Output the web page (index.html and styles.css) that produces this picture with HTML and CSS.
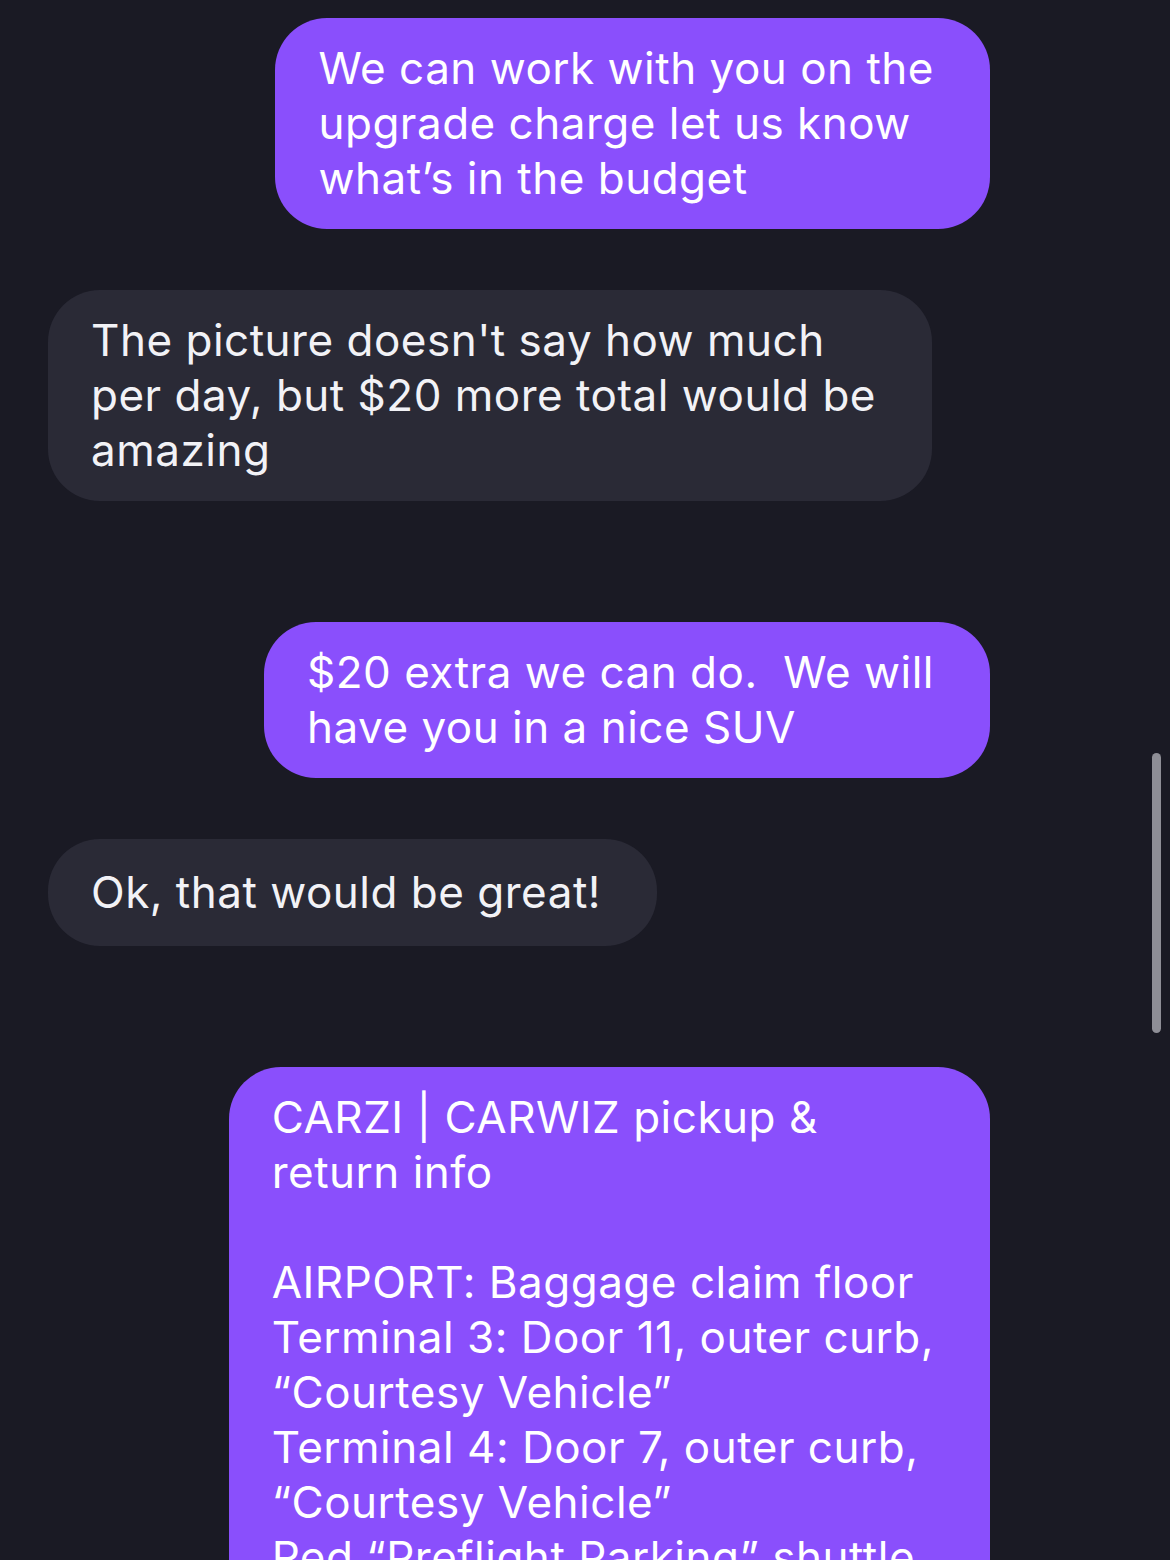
FILE: index.html
```html
<!DOCTYPE html>
<html>
<head>
<meta charset="utf-8">
<link rel="stylesheet" href="styles.css">
</head>
<body>
<div class="chat">
  <div class="row out first"><div class="bubble out-b">We can work with you on the<br>upgrade charge let us know<br>what’s in the budget</div></div>
  <div class="row in gap"><div class="bubble in-b">The picture doesn't say how much<br>per day, but $20 more total would be<br>amazing</div></div>
  <div class="row out biggap"><div class="bubble out-b">$20 extra we can do.&nbsp; We will<br>have you in a nice SUV</div></div>
  <div class="row in gap"><div class="bubble in-b single">Ok, that would be great!</div></div>
  <div class="row out biggap"><div class="bubble out-b">CARZI | CARWIZ pickup &amp;<br>return info<br><br>AIRPORT: Baggage claim floor<br>Terminal 3: Door 11, outer curb,<br>“Courtesy Vehicle”<br>Terminal 4: Door 7, outer curb,<br>“Courtesy Vehicle”<br>Red “Preflight Parking” shuttle<br>to the lot</div></div>
</div>
<div class="scrollbar"></div>
</body>
</html>
```
FILE: styles.css
```css
html, body {
  margin: 0;
  padding: 0;
  background: #1a1a24;
  height: 1560px;
  overflow: hidden;
}
.chat {
  display: flex;
  flex-direction: column;
  padding: 18px 180px 0 48px;
  font-family: Inter, "Noto Sans", sans-serif;
  font-size: 44px;
  line-height: 55px;
  letter-spacing: 0.5px;
}
.row { display: flex; }
.row.out { justify-content: flex-end; }
.row.in { justify-content: flex-start; }
.row.gap { margin-top: 61px; }
.row.biggap { margin-top: 121px; }
.bubble {
  white-space: nowrap;
  padding: 23px 56px 23px 43px;
  border-radius: 52px;
}
.bubble.single { padding-top: 26px; padding-bottom: 26px; }
.out-b { background: #8a4ffc; color: #ffffff; }
.in-b { background: #2a2a36; color: #f2f2f6; }
.scrollbar {
  position: absolute;
  left: 1152px;
  top: 753px;
  width: 9px;
  height: 280px;
  border-radius: 5px;
  background: #8e8e96;
}
```
